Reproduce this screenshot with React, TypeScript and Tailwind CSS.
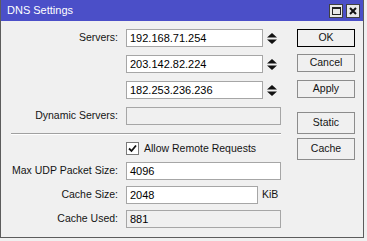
import React from "react";

const font = { fontFamily: '"Liberation Sans", Arial, sans-serif' };

function Spinner() {
  return (
    <svg width="10" height="11" viewBox="0 0 10 11" className="ml-[4px]">
      <path d="M5 0 L10 4.5 L0 4.5 Z" fill="#111" />
      <path d="M5 11 L10 6.5 L0 6.5 Z" fill="#111" />
    </svg>
  );
}

function Field({
  value,
  width = "w-[155px]",
  disabled = false,
}: {
  value?: string;
  width?: string;
  disabled?: boolean;
}) {
  return (
    <div
      className={`${width} h-[18px] border border-[#a6a6a6] flex items-center pl-[3px] text-[11px] text-black ${
        disabled ? "bg-[#f0f0f0]" : "bg-white"
      }`}
    >
      {value}
    </div>
  );
}

function Row({
  label,
  children,
}: {
  label?: string;
  children: React.ReactNode;
}) {
  return (
    <div className="flex items-center h-[18px]">
      <div className="w-[118px] text-right pr-[1px] text-[10.5px] text-[#141414]">
        {label}
      </div>
      <div className="ml-[7px] flex items-center">{children}</div>
    </div>
  );
}

function Btn({
  label,
  tall = false,
  primary = false,
}: {
  label: string;
  tall?: boolean;
  primary?: boolean;
}) {
  return (
    <div
      className={`w-[58px] ${tall ? "h-[22px]" : "h-[18px]"} border ${
        primary ? "border-black" : "border-[#8c8c8c]"
      } bg-[#f0f0f0] flex items-center justify-center text-[10.5px] text-[#141414]`}
    >
      {label}
    </div>
  );
}

export default function App() {
  return (
    <div className="w-[367px] h-[241px] bg-[#f0f0f0]" style={font}>
      <div className="w-[364px] h-[238px] border-l border-r border-b border-[#5c5c5c] flex flex-col">
        <div className="h-[21px] bg-[#4b4fc8] flex items-center pl-[6px] pr-[3px]">
          <span className="text-white text-[11px] flex-1">DNS Settings</span>
          <div className="flex gap-[3px]">
            <div className="w-[14px] h-[14px] bg-[#e8e8e8] border border-[#404040] flex items-center justify-center">
              <div className="w-[9px] h-[8px] border border-[#222] border-t-2" />
            </div>
            <div className="w-[14px] h-[14px] bg-[#e8e8e8] border border-[#404040] flex items-center justify-center">
              <svg width="8" height="8" viewBox="0 0 8 8">
                <path d="M1 1 L7 7 M7 1 L1 7" stroke="#111" strokeWidth="2" />
              </svg>
            </div>
          </div>
        </div>
        <div className="flex pt-[8px]">
          <div className="w-[285px] flex flex-col">
            <div className="flex flex-col gap-[8px]">
              <Row label="Servers:">
                <Field value="192.168.71.254" width="w-[137px]" />
                <Spinner />
              </Row>
              <Row>
                <Field value="203.142.82.224" width="w-[137px]" />
                <Spinner />
              </Row>
              <Row>
                <Field value="182.253.236.236" width="w-[137px]" />
                <Spinner />
              </Row>
              <Row label="Dynamic Servers:">
                <Field disabled />
              </Row>
            </div>
            <div className="ml-[10px] w-[270px] mt-[8px] border-t border-[#a0a0a0] border-b border-b-white" />
            <div className="flex items-center h-[13px] mt-[7px] ml-[125px]">
              <div className="w-[13px] h-[13px] bg-white border border-[#7a7a7a] flex items-center justify-center">
                <svg width="9" height="9" viewBox="0 0 9 9">
                  <path d="M1 4.5 L3.5 7 L8 1.5" stroke="#111" strokeWidth="1.8" fill="none" />
                </svg>
              </div>
              <span className="ml-[5px] text-[10.5px] text-[#141414]">
                Allow Remote Requests
              </span>
            </div>
            <div className="flex flex-col gap-[6px] mt-[7px]">
              <Row label="Max UDP Packet Size:">
                <Field value="4096" />
              </Row>
              <Row label="Cache Size:">
                <Field value="2048" width="w-[132px]" />
                <span className="ml-[4px] text-[10.5px] text-[#141414]">KiB</span>
              </Row>
              <Row label="Cache Used:">
                <Field value="881" disabled />
              </Row>
            </div>
          </div>
          <div className="ml-[11px] flex flex-col">
            <Btn label="OK" primary />
            <div className="mt-[7px]">
              <Btn label="Cancel" />
            </div>
            <div className="mt-[8px]">
              <Btn label="Apply" />
            </div>
            <div className="mt-[14px]">
              <Btn label="Static" tall />
            </div>
            <div className="mt-[4px]">
              <Btn label="Cache" tall />
            </div>
          </div>
        </div>
      </div>
    </div>
  );
}
